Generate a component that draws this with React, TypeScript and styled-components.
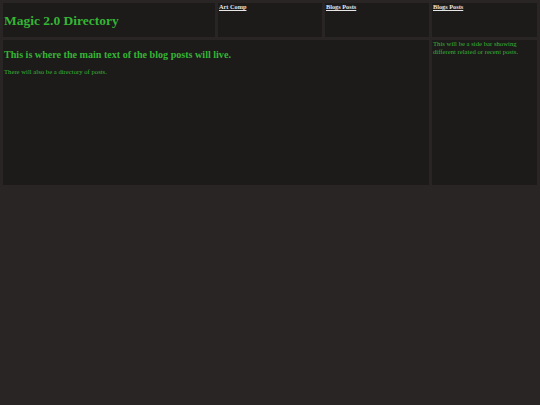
import React from 'react';
import styled, { createGlobalStyle } from 'styled-components';

const GlobalStyle = createGlobalStyle`
    html, body {
        margin: 0;
        padding: 0;
        background-color: #292525;
        font-family: "Liberation Serif", "Times New Roman", serif;
    }
`;

const Page = styled.div`
    display: grid;
    grid-template-columns: 212px 104px 104px 1fr;
    grid-template-rows: 34px 145px;
    gap: 3px;
    padding: 3px;
`;

const Panel = styled.div<{ span?: number }>`
    background-color: #1d1a1a;
    grid-column: span ${props => props.span || 1};
    min-width: 0;
`;

const TitlePanel = styled(Panel)`
    display: flex;
    align-items: center;
    padding: 1px 1px 0;
`;

const Title = styled.h1`
    margin: 0;
    color: #34b534;
    font-size: 13.5px;
    font-weight: bold;
    line-height: 16px;
`;

const NavLink = styled.a`
    display: block;
    padding: 0 1px;
    color: #e6e6e6;
    font-size: 6.3px;
    font-weight: bold;
    line-height: 8px;
    text-decoration: underline;
`;

const MainPanel = styled(Panel)`
    padding: 9px 1px 0;
`;

const Heading = styled.h2`
    margin: 0 0 7px;
    color: #34b534;
    font-size: 10.1px;
    font-weight: bold;
    line-height: 12px;
`;

const Text = styled.p`
    margin: 0;
    color: #34b534;
    font-size: 6.7px;
    line-height: 7.5px;
`;

const SidePanel = styled(Panel)`
    padding: 0 1px;
`;

export default function App() {
    return (
        <>
            <GlobalStyle />
            <Page>
                <TitlePanel>
                    <Title>Magic 2.0 Directory</Title>
                </TitlePanel>
                <Panel>
                    <NavLink href="#">Art Comp</NavLink>
                </Panel>
                <Panel>
                    <NavLink href="#">Blogs Posts</NavLink>
                </Panel>
                <Panel>
                    <NavLink href="#">Blogs Posts</NavLink>
                </Panel>
                <MainPanel span={3}>
                    <Heading>This is where the main text of the blog posts will live.</Heading>
                    <Text>There will also be a directory of posts.</Text>
                </MainPanel>
                <SidePanel>
                    <Text>This will be a side bar showing different related or recent posts.</Text>
                </SidePanel>
            </Page>
        </>
    );
}
